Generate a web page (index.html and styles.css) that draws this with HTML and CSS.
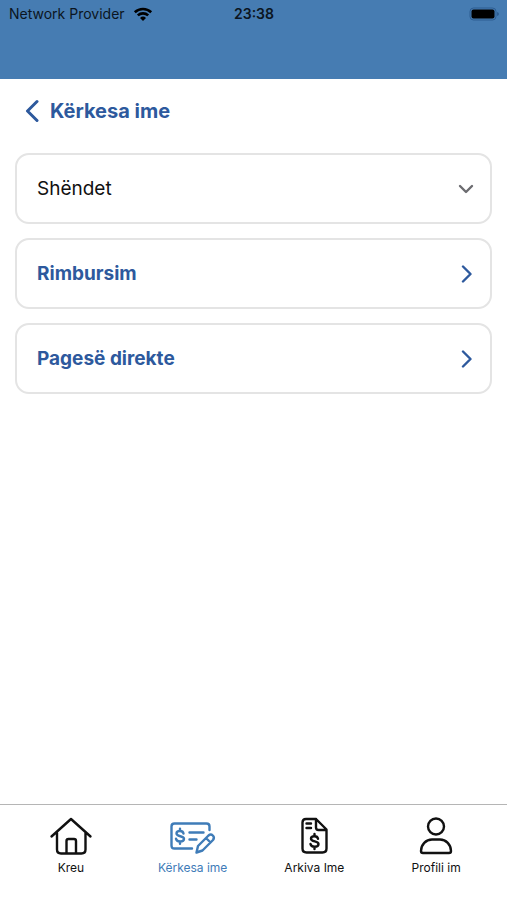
FILE: index.html
```html
<!DOCTYPE html>
<html lang="sq">
<head>
<meta charset="utf-8">
<meta name="viewport" content="width=device-width, initial-scale=1">
<title>Kërkesa ime</title>
<link rel="stylesheet" href="styles.css">
</head>
<body>
<header class="top">
  <div class="status">
    <div class="carrier">
      <span>Network Provider</span>
      <svg class="wifi" viewBox="0 0 20 14" aria-hidden="true">
        <path d="M1.8 5.2a12 12 0 0 1 16.4 0M4.8 8.4a7.6 7.6 0 0 1 10.4 0" fill="none" stroke="currentColor" stroke-width="2.6"/>
        <path d="M10 14 7 10.9a4.4 4.4 0 0 1 6 0z" fill="currentColor"/>
      </svg>
    </div>
    <time class="clock">23:38</time>
    <svg class="battery" viewBox="0 0 30 14" aria-hidden="true">
      <rect x="1" y="1" width="26" height="12" rx="3.5" fill="none" stroke="#2d5c91"/>
      <rect x="2.5" y="2.5" width="23" height="9" rx="2" fill="#000"/>
      <path d="M28 5v4q2-.6 2-2t-2-2z" fill="#2d5c91"/>
    </svg>
  </div>
</header>
<main class="content">
  <a class="back" href="#">
    <svg class="back-icon" viewBox="0 0 14 24" aria-hidden="true"><path d="M12 2.5 2.500 12l9.500 9.500"/></svg>
    <h1>Kërkesa ime</h1>
  </a>
  <div class="card picker">
    <select class="select" aria-label="Kategoria">
      <option>Shëndet</option>
    </select>
    <svg class="down" viewBox="0 0 16 10" aria-hidden="true"><path d="m2 2 6 6 6-6"/></svg>
  </div>
  <a class="card link" href="#">
    <span>Rimbursim</span>
    <svg class="next" viewBox="0 0 12 18" aria-hidden="true"><path d="m2 1.500 7.500 7.500-7.500 7.500"/></svg>
  </a>
  <a class="card link" href="#">
    <span>Pagesë direkte</span>
    <svg class="next" viewBox="0 0 12 18" aria-hidden="true"><path d="m2 1.500 7.500 7.500-7.500 7.500"/></svg>
  </a>
</main>
<nav class="tabs">
  <a class="tab" href="#">
    <svg viewBox="0 0 48 40" aria-hidden="true">
      <path d="M4.500 20.500 24 3l19.500 17.500M10 17v16.500q0 4 4 4h20.500q4 0 4-4V17M19.500 37V25q0-2 2-2h5.500q2 0 2 2v12"/>
    </svg>
    <span>Kreu</span>
  </a>
  <a class="tab active" href="#" aria-current="page">
    <svg viewBox="0 0 48 40" aria-hidden="true">
      <path d="M23 32.500H5.500q-3 0-3-3V10.500q0-3 3-3h32q3 0 3 3V14M20.500 16.500h14M20.500 23.500h7"/>
      <path d="M14.500 17.500q-.5-2.500-3.500-2.500-3.500 0-3.500 2.500c0 3.500 7.500 2 7.500 5.300q0 2.700-4 2.700-3.500 0-4-2.700M11 12.800V15m0 10.500v2.300"/>
      <path d="m27.500 36.500 1.500-6.500L39.500 19.500c3-2.500 7 1 4.500 4.500L33.500 34.500zM37 22l4.500 4.500"/>
    </svg>
    <span>Kërkesa ime</span>
  </a>
  <a class="tab" href="#">
    <svg viewBox="0 0 48 40" aria-hidden="true">
      <path d="M26 3H16q-3.500 0-3.500 3.500v26q0 4 4 4h16q4 0 4-4V13.500L26 3v8.500q0 2.500 2.500 2.500h8M16.500 7.500h4.500M16.500 12h4.500"/>
      <path d="M28 22.800q-.5-2.500-3.500-2.500-3.500 0-3.500 2.400c0 3.500 7.500 2 7.500 5.300q0 2.700-4 2.700-3.500 0-4-2.700M24.500 18v2.300m0 10.400V33"/>
    </svg>
    <span>Arkiva Ime</span>
  </a>
  <a class="tab" href="#">
    <svg viewBox="0 0 48 40" aria-hidden="true">
      <circle cx="24" cy="10.500" r="8"/>
      <path d="M11 37q-2 0-2-2c0-6.500 5-11.500 11-11.500h8c6 0 11 5 11 11.500q0 2-2 2z"/>
    </svg>
    <span>Profili im</span>
  </a>
</nav>
</body>
</html>
```
FILE: styles.css
```css
* {
  box-sizing: border-box;
}

body {
  margin: 0;
  min-height: 100vh;
  display: flex;
  flex-direction: column;
  background: #fff;
  color: #111;
  font-family: Inter, "Liberation Sans", sans-serif;
}

a {
  color: inherit;
  text-decoration: none;
}

svg {
  display: block;
  flex: none;
}

.top {
  background: #467cb2;
  padding: 4px 8px 55px 9px;
}

.status {
  display: grid;
  grid-template-columns: 1fr auto 1fr;
  align-items: center;
  height: 20px;
  font-size: 14px;
  line-height: 20px;
  color: #0b1521;
}

.carrier {
  display: flex;
  align-items: center;
  gap: 8px;
}

.wifi {
  width: 20px;
  height: 14px;
  color: #000;
}

.clock {
  font-weight: 600;
}

.battery {
  width: 30px;
  height: 14px;
  justify-self: end;
}

.content {
  flex: 1;
  display: flex;
  flex-direction: column;
  gap: 14px;
  padding: 17px 15px;
}

.back {
  display: flex;
  align-items: center;
  align-self: flex-start;
  gap: 11px;
  margin-bottom: 13px;
  padding: 0 10px;
  color: #2d599d;
}

.back h1 {
  margin: 0;
  font-size: 20px;
  line-height: 30px;
  font-weight: 700;
}

.back-icon,
.next,
.down {
  fill: none;
  stroke: #2d599d;
  stroke-width: 3;
  stroke-linecap: round;
  stroke-linejoin: round;
}

.back-icon {
  width: 14px;
  height: 24px;
}

.card {
  display: flex;
  align-items: center;
  min-height: 71px;
  border: 2px solid #e4e4e4;
  border-radius: 14px;
  font-size: 19px;
  line-height: 25px;
}

.link {
  justify-content: space-between;
  padding: 0 17px 0 20px;
  color: #2d599d;
  font-weight: 700;
}

.next {
  width: 12px;
  height: 18px;
  stroke-width: 2.4;
}

.picker {
  display: grid;
}

.select,
.down {
  grid-area: 1 / 1;
}

.select {
  appearance: none;
  width: 100%;
  height: 67px;
  padding: 0 48px 0 20px;
  border: 0;
  border-radius: 12px;
  background: transparent;
  color: #111;
  font: inherit;
}

.down {
  width: 16px;
  height: 10px;
  margin-right: 16px;
  justify-self: end;
  stroke: #6c6c70;
  stroke-width: 2.4;
  pointer-events: none;
}

.tabs {
  display: grid;
  grid-template-columns: repeat(4, 1fr);
  padding: 11px 10px 24px;
  border-top: 1px solid #b5b5b5;
}

.tab {
  display: flex;
  flex-direction: column;
  align-items: center;
  gap: 4px;
  font-size: 12px;
  line-height: 16px;
}

.tab svg {
  width: 48px;
  height: 40px;
  fill: none;
  stroke: currentColor;
  stroke-width: 2.4;
  stroke-linecap: round;
  stroke-linejoin: round;
}

.active {
  color: #3f7cb8;
}
```
